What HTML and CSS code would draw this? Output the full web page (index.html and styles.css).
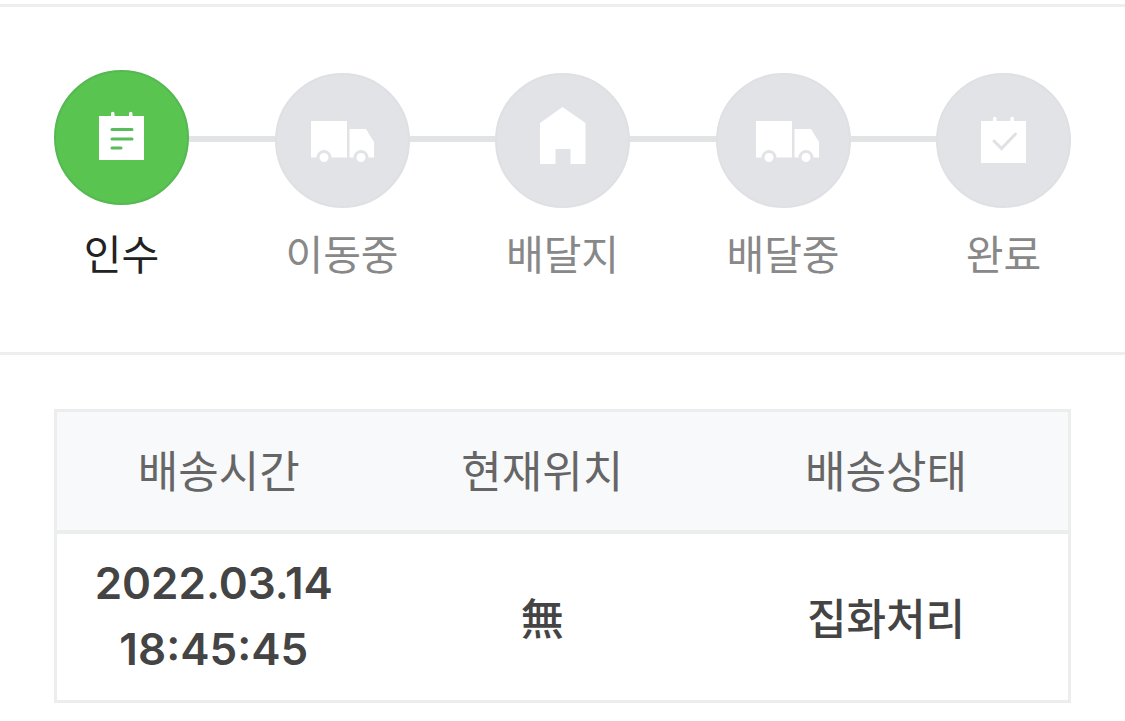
FILE: index.html
```html
<!DOCTYPE html>
<html lang="ko">
<head>
<meta charset="UTF-8" />
<meta name="viewport" content="width=device-width, initial-scale=1" />
<title>배송조회</title>
<link rel="stylesheet" href="styles.css">
</head>
<body>
  <section class="progress">
    <ol class="steps">
      <li class="step active" aria-current="step">
        <svg class="icon" viewBox="0 0 135 135" aria-hidden="true">
          <circle class="disc" cx="67.5" cy="67.5" r="66.5" />
          <path class="shape" d="M45 46H57V43.5A1.5 1.5 0 0 1 60.500 43.5V46H75V43.5A1.5 1.5 0 0 1 78.500 43.5V46H90V90H45Z" />
          <path class="mark" d="M58 59.500H78M58 69H78M58 78H67" />
        </svg>
        <span class="label">인수</span>
      </li>
      <li class="line" aria-hidden="true"></li>
      <li class="step">
        <svg class="icon" viewBox="0 0 135 135" aria-hidden="true">
          <circle class="disc" cx="67.5" cy="67.5" r="66.5" />
          <path class="shape" d="M36 48H72V84.500H36Z M74.500 56H91L99 69V84.500H74.500Z" />
          <circle class="wheel" cx="49" cy="84.500" r="6" />
          <circle class="wheel" cx="86" cy="84.500" r="6" />
        </svg>
        <span class="label">이동중</span>
      </li>
      <li class="line" aria-hidden="true"></li>
      <li class="step">
        <svg class="icon" viewBox="0 0 135 135" aria-hidden="true">
          <circle class="disc" cx="67.5" cy="67.5" r="66.5" />
          <path class="shape" d="M67.500 34L90.500 50V91H75.500V76H60.500V91H45V50Z" />
        </svg>
        <span class="label">배달지</span>
      </li>
      <li class="line" aria-hidden="true"></li>
      <li class="step">
        <svg class="icon" viewBox="0 0 135 135" aria-hidden="true">
          <circle class="disc" cx="67.5" cy="67.5" r="66.5" />
          <path class="shape" d="M40 48H76V84.500H40Z M78.500 56H95L103 69V84.500H78.500Z" />
          <circle class="wheel" cx="53" cy="84.500" r="6" />
          <circle class="wheel" cx="90" cy="84.500" r="6" />
        </svg>
        <span class="label">배달중</span>
      </li>
      <li class="line" aria-hidden="true"></li>
      <li class="step">
        <svg class="icon" viewBox="0 0 135 135" aria-hidden="true">
          <circle class="disc" cx="67.5" cy="67.5" r="66.5" />
          <path class="shape" d="M45 48H57V45.500A1.750 1.750 0 0 1 60.500 45.500V48H74.500V45.500A1.750 1.750 0 0 1 78 45.500V48H90V90H45Z" />
          <path class="mark" d="M58 68L65.500 75.500L79.500 61" />
        </svg>
        <span class="label">완료</span>
      </li>
    </ol>
  </section>

  <section class="history">
    <table>
      <thead>
        <tr>
          <th class="col-time" scope="col">배송시간</th>
          <th class="col-place" scope="col">현재위치</th>
          <th class="col-status" scope="col">배송상태</th>
        </tr>
      </thead>
      <tbody>
        <tr>
          <td class="time">2022.03.14<br>18:45:45</td>
          <td>無</td>
          <td>집화처리</td>
        </tr>
      </tbody>
    </table>
  </section>
</body>
</html>
```

FILE: styles.css
```css
* {
  box-sizing: border-box;
}

body {
  margin: 0;
  padding-top: 4px;
  background: #fff;
  color: #444;
  font-family: "Noto Sans CJK KR", sans-serif;
}

/* Delivery steps */
.progress {
  padding: 63px 54px 70px;
  border-top: 3px solid #eee;
  border-bottom: 3px solid #eee;
}

.steps {
  display: flex;
  margin: 0;
  padding: 0;
  list-style: none;
}

.step {
  display: flex;
  flex-direction: column;
  align-items: center;
  flex: none;
  width: 135px;
  padding-top: 3px;
}

.step.active {
  padding-top: 0;
}

.line {
  flex: 1;
  height: 6px;
  margin: 66px 0 0;
  background: #e2e3e5;
}

.icon {
  display: block;
  width: 135px;
  height: 135px;
}

.disc {
  fill: #e2e3e7;
  stroke: #dfe0e4;
  stroke-width: 2;
}

.shape {
  fill: #fff;
}

.mark {
  fill: none;
  stroke: #e0e1e4;
  stroke-width: 3;
  stroke-linecap: round;
}

.wheel {
  fill: #fff;
  stroke: #e2e3e7;
  stroke-width: 3;
}

.active .disc {
  fill: #5ac451;
  stroke: #55b852;
}

.active .mark {
  stroke: #5abb5a;
}

.label {
  margin-top: 14px;
  color: #888;
  font-size: 41px;
  line-height: 60px;
  white-space: nowrap;
}

.active .label {
  margin-top: 17px;
  color: #222;
}

/* Tracking history */
.history {
  padding: 54px 54px 16px;
}

table {
  width: 100%;
  table-layout: fixed;
  border: 3px solid #eceeee;
  border-spacing: 0;
  text-align: center;
}

th {
  padding: 24px 0 28px;
  border-bottom: 4px solid #eceeee;
  background: #f8f9fb;
  color: #666;
  font-size: 44px;
  font-weight: 400;
  line-height: 66px;
}

td {
  padding: 16px 0 18px;
  font-size: 43px;
  font-weight: 500;
  line-height: 66px;
}

.time {
  padding-right: 10px;
  font-family: Inter, sans-serif;
  font-size: 44px;
  font-weight: 600;
}

.col-time {
  width: 32%;
}

.col-place {
  width: 32%;
}

.col-status {
  width: 36%;
}
```
